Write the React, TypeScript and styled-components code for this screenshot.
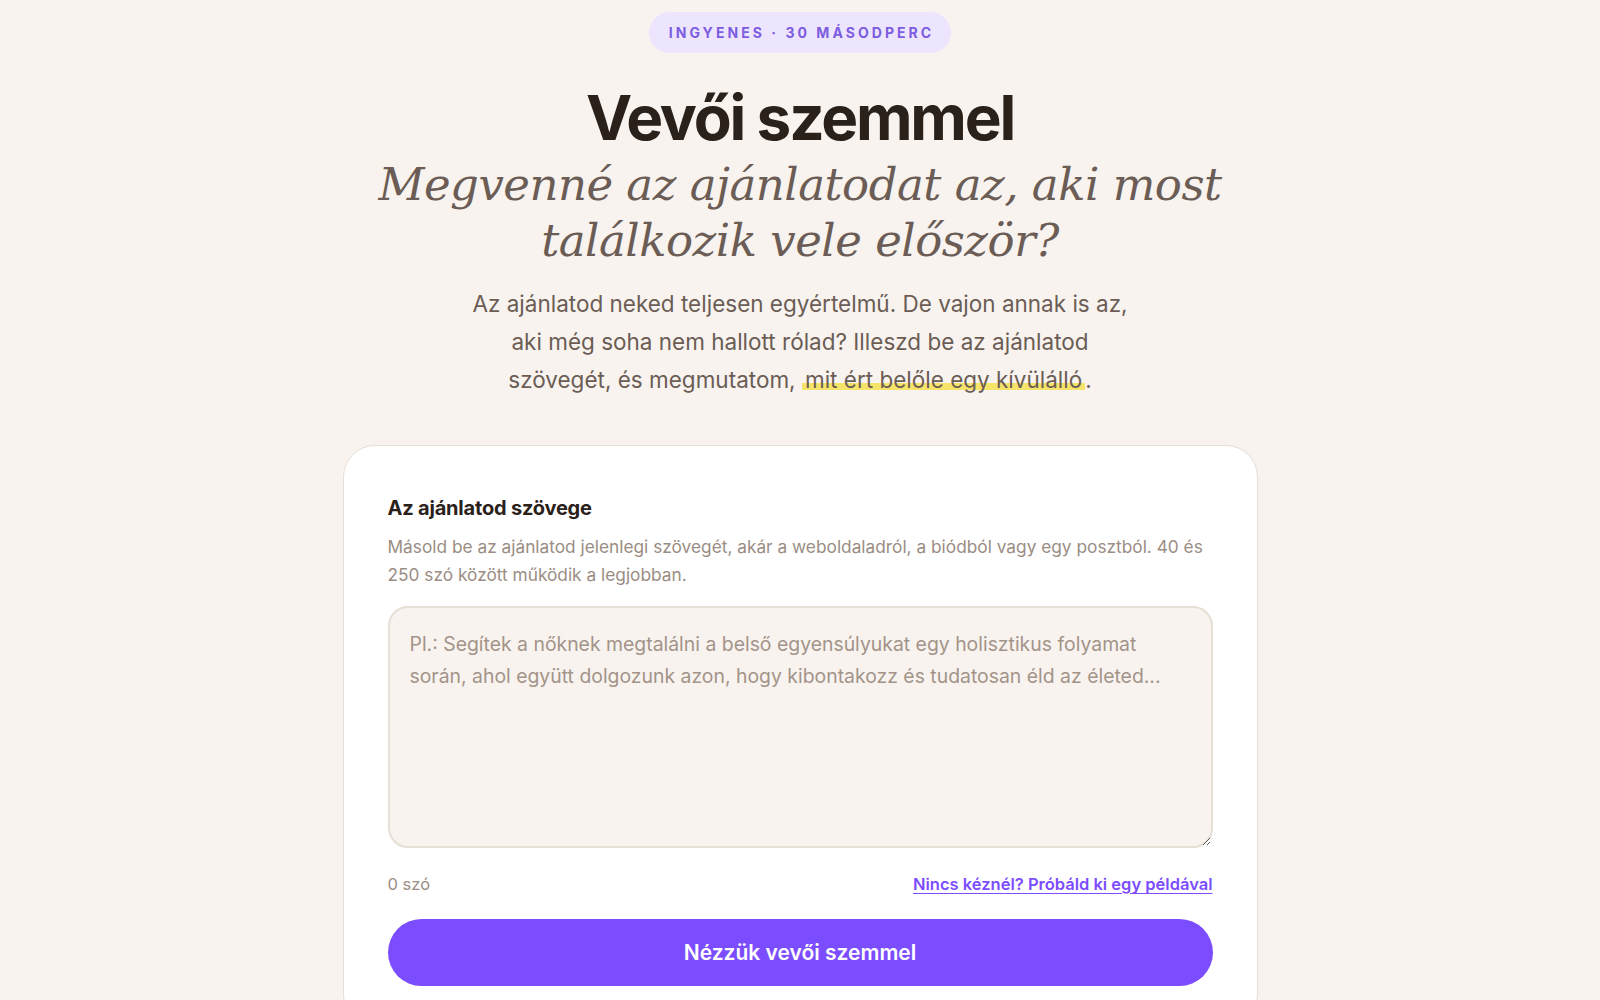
import styled, { createGlobalStyle } from "styled-components";

const GlobalStyle = createGlobalStyle`
  html, body {
    margin: 0;
    padding: 0;
    background: #f8f3ef;
  }
  body {
    font-family: Inter, "Noto Sans", sans-serif;
    color: #2a211b;
  }
  * {
    box-sizing: border-box;
  }
`;

const Page = styled.main`
  display: flex;
  flex-direction: column;
  align-items: center;
  padding-top: 12px;
  min-height: 1000px;
`;

const Badge = styled.div`
  display: flex;
  align-items: center;
  justify-content: center;
  height: 41px;
  padding: 0 17px 0 20px;
  border-radius: 21px;
  background: #ede5fd;
  color: #7c5ce0;
  font-size: 14px;
  font-weight: 700;
  letter-spacing: 3.05px;
  text-transform: uppercase;
`;

const Title = styled.h1`
  margin: 34px 0 0;
  font-size: 62px;
  line-height: 1;
  font-weight: 700;
  letter-spacing: -2.2px;
  color: #2a211b;
`;

const Subtitle = styled.h2`
  margin: 8px 0 0;
  font-family: "DejaVu Serif", "Liberation Serif", serif;
  font-style: italic;
  font-weight: 400;
  font-size: 45px;
  line-height: 56px;
  color: #6b5d55;
  text-align: center;
  letter-spacing: -0.5px;
`;

const Lead = styled.p`
  margin: 16px 0 0;
  font-size: 22.5px;
  line-height: 38px;
  color: #6b5d55;
  text-align: center;
`;

const Highlight = styled.span`
  background: linear-gradient(transparent 62%, #f6e46a 62%, #f6e46a 88%, transparent 88%);
  padding: 0 3px;
`;

const Card = styled.section`
  width: 915px;
  margin-top: 46px;
  padding: 50px 44px 40px;
  background: #ffffff;
  border: 1px solid #e6dfd5;
  border-radius: 32px;
  display: flex;
  flex-direction: column;
`;

const Label = styled.label`
  font-size: 20px;
  font-weight: 700;
  color: #2a211b;
  letter-spacing: -0.2px;
`;

const Hint = styled.p`
  margin: 13px 0 0;
  font-size: 17.3px;
  line-height: 28px;
  color: #9a8d84;
`;

const TextArea = styled.textarea`
  margin-top: 17px;
  width: 100%;
  height: 242px;
  padding: 21px 20px;
  background: #f8f3ef;
  border: 2px solid #e6dfd5;
  border-radius: 20px;
  font-family: Inter, "Noto Sans", sans-serif;
  font-size: 19.4px;
  line-height: 31.5px;
  color: #2a211b;
  resize: vertical;
  outline: none;

  &::placeholder {
    color: #a39389;
  }
`;

const MetaRow = styled.div`
  display: flex;
  justify-content: space-between;
  align-items: center;
  margin-top: 26px;
  font-size: 16.5px;
`;

const Count = styled.span`
  color: #9a8d84;
`;

const ExampleLink = styled.a`
  color: #7c4dff;
  font-weight: 600;
  text-decoration: underline;
  text-underline-offset: 3px;
  cursor: pointer;
`;

const Submit = styled.button`
  margin-top: 25px;
  height: 67px;
  width: 100%;
  border: none;
  border-radius: 34px;
  background: #7c4dff;
  color: #ffffff;
  font-family: Inter, "Noto Sans", sans-serif;
  font-size: 21px;
  font-weight: 600;
  cursor: pointer;
`;

export default function App() {
  return (
    <>
      <GlobalStyle />
      <Page>
        <Badge>Ingyenes · 30 másodperc</Badge>
        <Title>Vevői szemmel</Title>
        <Subtitle>
          Megvenné az ajánlatodat az, aki most
          <br />
          találkozik vele először?
        </Subtitle>
        <Lead>
          Az ajánlatod neked teljesen egyértelmű. De vajon annak is az,
          <br />
          aki még soha nem hallott rólad? Illeszd be az ajánlatod
          <br />
          szövegét, és megmutatom, <Highlight>mit ért belőle egy kívülálló</Highlight>.
        </Lead>
        <Card>
          <Label htmlFor="offer">Az ajánlatod szövege</Label>
          <Hint>
            Másold be az ajánlatod jelenlegi szövegét, akár a weboldaladról, a
            biódból vagy egy posztból. 40 és 250 szó között működik a legjobban.
          </Hint>
          <TextArea
            id="offer"
            placeholder="Pl.: Segítek a nőknek megtalálni a belső egyensúlyukat egy holisztikus folyamat során, ahol együtt dolgozunk azon, hogy kibontakozz és tudatosan éld az életed..."
          />
          <MetaRow>
            <Count>0 szó</Count>
            <ExampleLink>Nincs kéznél? Próbáld ki egy példával</ExampleLink>
          </MetaRow>
          <Submit>Nézzük vevői szemmel</Submit>
        </Card>
      </Page>
    </>
  );
}
